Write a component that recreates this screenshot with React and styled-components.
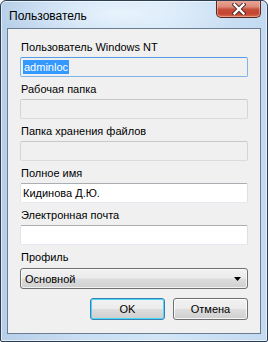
import styled, { createGlobalStyle } from "styled-components";

const Global = createGlobalStyle`
    body {
        margin: 0;
        background: #ffffff;
        font-family: "Liberation Sans", Arial, sans-serif;
    }
`

const Window = styled.div`
    width: 268px;
    height: 342px;
    box-sizing: border-box;
    border: 1px solid #2d3d52;
    border-radius: 6px 6px 2px 2px;
    display: flex;
    flex-direction: column;
    overflow: hidden;
    background:
        radial-gradient(ellipse 120px 30px at 120px 12px, rgba(235, 245, 253, 0.9), rgba(235, 245, 253, 0) 100%),
        linear-gradient(90deg, #b7cfe9 0%, #c9def3 30%, #d2e5f7 60%, #c3daf1 100%);
    box-shadow: inset 0 0 0 1px rgba(255, 255, 255, 0.6);
`

const TitleBar = styled.div`
    height: 27px;
    display: flex;
    justify-content: space-between;
    align-items: flex-start;
    padding: 0 6px 0 8px;
    flex-shrink: 0;
`

const Caption = styled.span`
    font-size: 12px;
    line-height: 13px;
    color: #000;
    margin-top: 9px;
`

const CloseButton = styled.div`
    width: 45px;
    height: 18px;
    margin-top: -1px;
    box-sizing: border-box;
    border: 1px solid #58271e;
    border-top: none;
    border-radius: 0 0 5px 5px;
    background: linear-gradient(180deg, #e9a99b 0%, #dd8a79 40%, #c54f3a 55%, #c4442f 80%, #d56f52 100%);
    box-shadow: inset 0 0 0 1px rgba(255, 200, 190, 0.5);
    display: flex;
    align-items: center;
    justify-content: center;
`

const Client = styled.div`
    flex: 1;
    margin: 0 6px 7px 6px;
    border: 1px solid #6b7d93;
    background: #f0f0f0;
    padding: 12px 12px 0 12px;
    display: flex;
    flex-direction: column;
`

const Field = styled.div`
    display: flex;
    flex-direction: column;
    margin-bottom: 6px;
`

const Label = styled.span`
    font-size: 11px;
    line-height: 13px;
    color: #000;
    padding-left: 1px;
    margin-bottom: 3px;
`

const TextBox = styled.div`
    height: 20px;
    box-sizing: border-box;
    border: 1px solid ${p => p.$focused ? "#569de5" : p.$disabled ? "#c9c9c9" : "#abadb3"};
    border-bottom-color: ${p => p.$focused ? "#7eb4ea" : p.$disabled ? "#dcdcdc" : "#e3e9ef"};
    border-left-color: ${p => p.$focused ? "#7eb4ea" : p.$disabled ? "#d5d5d5" : "#e2e3ea"};
    border-right-color: ${p => p.$focused ? "#7eb4ea" : p.$disabled ? "#d5d5d5" : "#dbdfe6"};
    border-radius: 2px;
    background: ${p => p.$disabled || p.$focused ? "#f0f0f0" : "#ffffff"};
    display: flex;
    align-items: center;
    padding-left: 2px;
    font-size: 11px;
    color: #000;
`

const Selected = styled.span`
    background: #3399ff;
    color: #fff;
    line-height: 14px;
    padding: 0 1px 0 1px;
`

const Select = styled.div`
    height: 21px;
    margin-top: 1px;
    box-sizing: border-box;
    border: 1px solid #707070;
    border-radius: 3px;
    background: linear-gradient(180deg, #f2f2f2 0%, #ebebeb 48%, #dddddd 52%, #cfcfcf 100%);
    box-shadow: inset 0 0 0 1px rgba(255, 255, 255, 0.7);
    display: flex;
    align-items: center;
    justify-content: space-between;
    padding: 0 6px 0 4px;
    font-size: 11px;
    color: #000;
`

const Buttons = styled.div`
    display: flex;
    justify-content: flex-end;
    gap: 8px;
    margin-top: 3px;
`

const Button = styled.div`
    width: 75px;
    height: 22px;
    box-sizing: border-box;
    border: 1px solid ${p => p.$default ? "#3c7fb1" : "#707070"};
    border-radius: 3px;
    background: linear-gradient(180deg, #f2f2f2 0%, #ebebeb 48%, #dddddd 52%, #cfcfcf 100%);
    box-shadow: inset 0 0 0 1px ${p => p.$default ? "#48d8fb" : "rgba(255, 255, 255, 0.8)"};
    display: flex;
    align-items: center;
    justify-content: center;
    font-size: 11px;
    color: #000;
`

function CloseGlyph(){
    return(
        <svg width="14" height="12" viewBox="0 0 14 12">
            <path d="M2.5 1.5 L11.5 10.5 M11.5 1.5 L2.5 10.5" stroke="#4a2a26" strokeWidth="4.2" strokeLinecap="square"/>
            <path d="M2.5 1.5 L11.5 10.5 M11.5 1.5 L2.5 10.5" stroke="#ffffff" strokeWidth="2.4" strokeLinecap="square"/>
        </svg>
    )
}

function Arrow(){
    return(
        <svg width="7" height="4" viewBox="0 0 7 4">
            <path d="M0 0 H7 L3.5 4 Z" fill="#000"/>
        </svg>
    )
}

export default function App(){
    return(
        <Window>
            <Global/>
            <TitleBar>
                <Caption>Пользователь</Caption>
                <CloseButton><CloseGlyph/></CloseButton>
            </TitleBar>
            <Client>
                <Field>
                    <Label>Пользователь Windows NT</Label>
                    <TextBox $focused><Selected>adminloc</Selected></TextBox>
                </Field>
                <Field>
                    <Label>Рабочая папка</Label>
                    <TextBox $disabled/>
                </Field>
                <Field>
                    <Label>Папка хранения файлов</Label>
                    <TextBox $disabled/>
                </Field>
                <Field>
                    <Label>Полное имя</Label>
                    <TextBox>Кидинова Д.Ю.</TextBox>
                </Field>
                <Field>
                    <Label>Электронная почта</Label>
                    <TextBox/>
                </Field>
                <Field>
                    <Label>Профиль</Label>
                    <Select>Основной<Arrow/></Select>
                </Field>
                <Buttons>
                    <Button $default>OK</Button>
                    <Button>Отмена</Button>
                </Buttons>
            </Client>
        </Window>
    )
}
